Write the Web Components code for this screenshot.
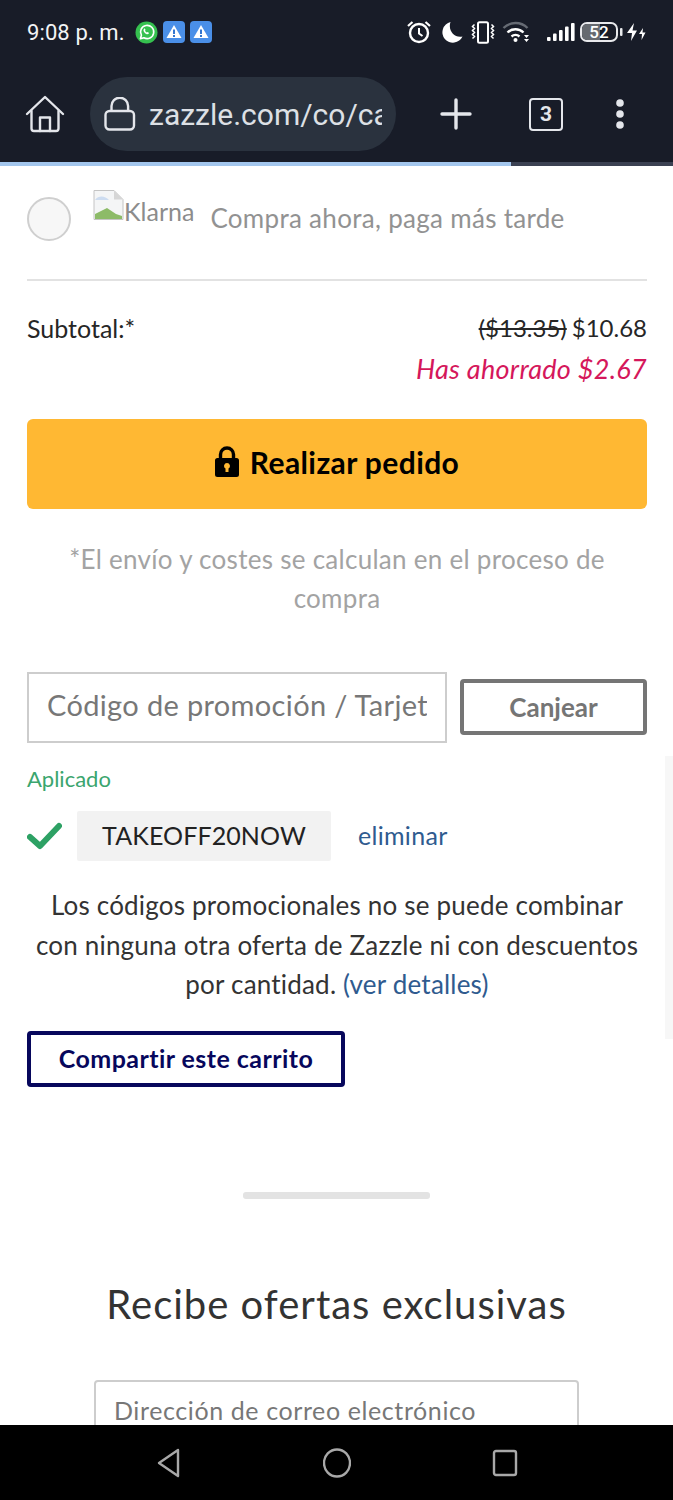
<!DOCTYPE html>
<html lang="es">
<head>
<meta charset="utf-8">
<title>Carrito</title>
<style>
    html, body {
        margin: 0;
        height: 1500px;
        overflow: hidden;
        background: #fff;
    }
    body {
        display: flex;
        flex-direction: column;
        font-family: "Lato", "Liberation Sans", sans-serif;
    }
    page-content {
        flex: 1;
        min-height: 0;
    }
</style>
</head>
<body>
<browser-chrome url="zazzle.com/co/cart" tabs="3" progress="511"></browser-chrome>
<page-content>
    <payment-option label="Klarna" text="Compra ahora, paga más tarde"></payment-option>
    <order-summary was="($13.35)" total="$10.68" saved="Has ahorrado $2.67"></order-summary>
    <promo-form code="TAKEOFF20NOW"></promo-form>
    <share-cart></share-cart>
    <offers-signup></offers-signup>
</page-content>
<nav-bar></nav-bar>

<script>
class BrowserChrome extends HTMLElement {
    constructor() {
        super();
        this.attachShadow({ mode: 'open' });
    }

    connectedCallback() {
        const url = this.getAttribute('url');
        const tabs = this.getAttribute('tabs');
        const progress = this.getAttribute('progress');

        this.shadowRoot.innerHTML = `
            <style>
                :host {
                    display: block;
                    flex: none;
                    height: 166px;
                    background: #181c28;
                    color: #fff;
                    position: relative;
                }
                .status {
                    display: flex;
                    align-items: center;
                    height: 32px;
                    padding: 16px 27px 0 27px;
                    font: 400 22px "Roboto", sans-serif;
                    color: #f2f3f5;
                }
                .time { margin-right: 5px; letter-spacing: .1px; }
                .status svg { display: block; flex: none; }
                .left { display: flex; align-items: center; gap: 5px; }
                .right { display: flex; align-items: center; margin-left: auto; }
                .toolbar {
                    display: flex;
                    align-items: center;
                    height: 74px;
                    margin-top: 29px;
                    padding-left: 25px;
                }
                .home { width: 40px; flex: none; margin-right: 25px; display: block; }
                .pill {
                    width: 306px;
                    height: 74px;
                    flex: none;
                    box-sizing: border-box;
                    border-radius: 37px;
                    background: #2a323e;
                    display: flex;
                    align-items: center;
                    padding: 0 14px 0 14px;
                    font: 400 30px "Roboto", sans-serif;
                    color: #dde0e5;
                }
                .pill svg { flex: none; margin-right: 13px; }
                .url { overflow: hidden; white-space: nowrap; flex: 1; }
                .actions { display: flex; align-items: center; }
                .tabs {
                    width: 34px;
                    height: 33px;
                    box-sizing: border-box;
                    border: 2.5px solid #e4e6eb;
                    border-radius: 4px;
                    display: flex;
                    align-items: center;
                    justify-content: center;
                    font: 700 21px "Roboto", sans-serif;
                    color: #e4e6eb;
                    margin: 0 52px 0 57px;
                }
                .track {
                    position: absolute;
                    left: 0;
                    right: 0;
                    bottom: 0;
                    height: 4px;
                    background: #3b4152;
                }
                .bar { height: 100%; background: #a3c6ed; }
            </style>
            <div class="status">
                <div class="left">
                    <span class="time">9:08 p. m.</span>
                    <svg width="23" height="23" viewBox="0 0 23 23">
                        <circle cx="11.5" cy="11.5" r="11" fill="#35c04f"/>
                        <path d="M5.4 17.7l1-3.5a6.6 6.6 0 1 1 2.5 2.5z" fill="none" stroke="#fff" stroke-width="1.6" stroke-linejoin="round"/>
                        <path d="M9 8c-.9.9-.6 2.300.7 3.700s2.800 1.900 3.800 1.100l.7-.9-1.700-1-.7.6c-.8-.3-1.400-.9-1.800-1.800l.6-.7-.9-1.700z" fill="#fff"/>
                    </svg>
                    <svg width="22" height="22" viewBox="0 0 22 22">
                        <rect width="22" height="22" rx="4" fill="#4a8fe8"/>
                        <path d="M11 4l7.500 13h-15z" fill="#fff"/>
                        <rect x="10" y="8.500" width="2" height="4.500" fill="#3576d0"/>
                        <rect x="10" y="14" width="2" height="2" fill="#3576d0"/>
                    </svg>
                    <svg width="22" height="22" viewBox="0 0 22 22">
                        <rect width="22" height="22" rx="4" fill="#4a8fe8"/>
                        <path d="M11 4l7.500 13h-15z" fill="#fff"/>
                        <rect x="10" y="8.500" width="2" height="4.500" fill="#3576d0"/>
                        <rect x="10" y="14" width="2" height="2" fill="#3576d0"/>
                    </svg>
                </div>
                <div class="right">
                    <svg width="26" height="24" viewBox="0 0 26 24" fill="none" stroke="#fff">
                        <circle cx="13" cy="13" r="9" stroke-width="2.400"/>
                        <path d="M13 8v5.500l3.500 2.500" stroke-width="2"/>
                        <path d="M2 6l4.500-4M24 6l-4.500-4" stroke-width="2.200"/>
                    </svg>
                    <svg width="22" height="23" viewBox="0 0 22 23" style="margin-left:9px">
                        <path d="M9.500 1a10.500 10.500 0 1 0 12 14.500C14 17.500 6.500 10 9.500 1z" fill="#fff"/>
                    </svg>
                    <svg width="24" height="23" viewBox="0 0 24 23" fill="none" stroke="#fff" style="margin-left:8px">
                        <rect x="7" y="1.200" width="10" height="20.600" rx="1.500" stroke-width="2"/>
                        <path d="M3.500 3.500l-2 2 2 2-2 2 2 2-2 2 2 2-2 2M20.500 3.500l2 2-2 2 2 2-2 2 2 2-2 2 2 2" stroke-width="1.500"/>
                    </svg>
                    <svg width="27" height="22" viewBox="0 0 27 22" fill="none" style="margin-left:7px">
                        <path d="M1.500 7a17 17 0 0 1 24 0" stroke="#666b74" stroke-width="2.400"/>
                        <path d="M5.500 11.500a11.500 11.500 0 0 1 16 0" stroke="#fff" stroke-width="2.400"/>
                        <path d="M9.500 15.500a6 6 0 0 1 8 0" stroke="#fff" stroke-width="2.400"/>
                        <circle cx="13.500" cy="19" r="2" fill="#fff"/>
                        <path d="M22 14h5l-2.500 3zM22 18h5l-2.500 3z" fill="#fff"/>
                    </svg>
                    <svg width="28" height="18" viewBox="0 0 28 18" style="margin-left:18px">
                        <rect x="0" y="14" width="3.600" height="4" rx="1" fill="#fff"/>
                        <rect x="6" y="10.500" width="3.600" height="7.500" rx="1" fill="#fff"/>
                        <rect x="12" y="7" width="3.600" height="11" rx="1" fill="#fff"/>
                        <rect x="18" y="3.500" width="3.600" height="14.500" rx="1" fill="#fff"/>
                        <rect x="24" y="0" width="3.600" height="18" rx="1" fill="#fff"/>
                    </svg>
                    <span style="position:relative;width:38px;height:20px;box-sizing:border-box;border:2px solid #e8e9ec;border-radius:7px;margin-left:5px;display:flex;align-items:center;justify-content:center;font:500 17px Roboto,sans-serif;color:#fff;overflow:hidden;flex:none">
                        <span style="position:absolute;left:0;top:0;bottom:0;width:52%;background:#666a70"></span>
                        <span style="position:relative">52</span>
                    </span>
                    <svg width="3" height="8" viewBox="0 0 3 8" style="margin-left:2px"><rect width="2.500" height="8" rx="1" fill="#e8e9ec"/></svg>
                    <svg width="20" height="18" viewBox="0 0 20 18" style="margin-left:3px">
                        <path d="M8 0L1 10h5l-1 8 6-10.500H6.500z" fill="#fff"/>
                        <path d="M17 5l-4 6h3l-.5 6 4-7.500h-3z" fill="#fff"/>
                    </svg>
                </div>
            </div>
            <div class="toolbar">
                <svg class="home" width="40" height="38" viewBox="0 0 40 38" fill="none" stroke="#e4e6eb" stroke-width="2.400" stroke-linejoin="round" stroke-linecap="round">
                    <path d="M2 19L20 2l18 17"/>
                    <path d="M6.500 16v17.500a2.500 2.500 0 0 0 2.500 2.500h22a2.500 2.500 0 0 0 2.500-2.500V16"/>
                    <path d="M15 36V22.500h10V36"/>
                </svg>
                <div class="pill">
                    <svg width="32" height="34" viewBox="0 0 32 34" fill="none" stroke="#e4e6eb" stroke-width="2.400">
                        <rect x="1.500" y="14" width="28.500" height="18.500" rx="4"/>
                        <path d="M7.500 14V9a8.300 8.300 0 0 1 16.600 0v5"/>
                    </svg>
                    <span class="url">${url}</span>
                </div>
                <div class="actions">
                    <svg width="32" height="32" viewBox="0 0 32 32" style="margin-left:44px;display:block">
                        <path d="M16 2v28M2 16h28" stroke="#e4e6eb" stroke-width="3.400" stroke-linecap="round"/>
                    </svg>
                    <span class="tabs">${tabs}</span>
                    <svg width="10" height="32" viewBox="0 0 10 32" style="display:block">
                        <circle cx="5" cy="5" r="3.800" fill="#e4e6eb"/>
                        <circle cx="5" cy="16" r="3.800" fill="#e4e6eb"/>
                        <circle cx="5" cy="27" r="3.800" fill="#e4e6eb"/>
                    </svg>
                </div>
            </div>
            <div class="track"><div class="bar" style="width:${progress}px"></div></div>
        `;
    }
}

class PaymentOption extends HTMLElement {
    constructor() {
        super();
        this.attachShadow({ mode: 'open' });
    }

    connectedCallback() {
        this.shadowRoot.innerHTML = `
            <style>
                :host {
                    display: block;
                    margin: 0 26px 0 27px;
                    height: 115px;
                    box-sizing: border-box;
                    border-bottom: 2px solid #e2e2e2;
                    position: relative;
                    padding-top: 24px;
                    color: #929292;
                }
                .row { display: flex; align-items: flex-start; }
                .radio {
                    width: 44px;
                    height: 44px;
                    box-sizing: border-box;
                    flex: none;
                    border: 2px solid #cfcfcf;
                    border-radius: 50%;
                    background: #f7f7f7;
                    margin-top: 7px;
                    margin-right: 22px;
                }
                .broken {
                    display: flex;
                    align-items: flex-start;
                    font-size: 25px;
                    color: #8c8c8c;
                    margin-right: 16px;
                    line-height: 42px;
                }
                .broken svg { display: block; flex: none; }
                .text {
                    font-size: 26px;
                    line-height: 42px;
                    margin-top: 7px;
                    white-space: nowrap;
                    letter-spacing: .3px;
                }
            </style>
            <div class="row">
                <span class="radio"></span>
                <span class="broken">
                    <svg width="31" height="30" viewBox="0 0 31 30">
                        <path d="M1 .5h20l9 9v20H1z" fill="#f4f5f6" stroke="#c4c4c4"/>
                        <path d="M21 .5v9h9z" fill="#d6d6d6"/>
                        <path d="M2 10c4-5 10-4 14 0H2z" fill="#cddcf0"/>
                        <path d="M2 29V24l12-6 9 6 6 2v3z" fill="#8dbb68"/>
                    </svg>
                    <span>${this.getAttribute('label')}</span>
                </span>
                <span class="text">${this.getAttribute('text')}</span>
            </div>
        `;
    }
}

class OrderSummary extends HTMLElement {
    constructor() {
        super();
        this.attachShadow({ mode: 'open' });
    }

    connectedCallback() {
        this.shadowRoot.innerHTML = `
            <style>
                :host {
                    display: block;
                    padding: 27px 26px 0 27px;
                    font-size: 25px;
                    color: #262626;
                }
                .line {
                    display: flex;
                    justify-content: space-between;
                    line-height: 40px;
                }
                .price { font-size: 24px; }
                s { text-decoration-thickness: 2px; margin-right: 5px; }
                .saved {
                    margin-top: 1px;
                    text-align: right;
                    color: #d5175b;
                    font-style: italic;
                    font-size: 27px;
                    letter-spacing: .3px;
                    line-height: 40px;
                }
                .cta {
                    margin-top: 30px;
                    height: 90px;
                    box-sizing: border-box;
                    padding-bottom: 5px;
                    border-radius: 6px;
                    background: #ffb833;
                    color: #000;
                    display: flex;
                    align-items: center;
                    justify-content: center;
                    gap: 11px;
                    font-size: 30px;
                    letter-spacing: .4px;
                    font-weight: 700;
                }
                .cta svg { display: block; }
                .note {
                    margin: 31px 12px 0;
                    font-size: 26px;
                    text-align: center;
                    line-height: 39px;
                    color: #a3a3a3;
                    letter-spacing: .28px;
                }
            </style>
            <div class="line">
                <span>Subtotal:*</span>
                <span class="price"><s>${this.getAttribute('was')}</s>${this.getAttribute('total')}</span>
            </div>
            <div class="saved">${this.getAttribute('saved')}</div>
            <div class="cta">
                <svg width="24" height="31" viewBox="0 0 24 31">
                    <path d="M5.500 13V8.500a6.500 6.500 0 0 1 13 0V13" fill="none" stroke="#000" stroke-width="3.400"/>
                    <path fill-rule="evenodd" d="M2.500 12h19A2.500 2.500 0 0 1 24 14.500v14a2.500 2.500 0 0 1-2.500 2.500h-19A2.500 2.500 0 0 1 0 28.500v-14A2.500 2.500 0 0 1 2.500 12zM12 17a3 3 0 0 0-1.500 5.600V26h3v-3.400A3 3 0 0 0 12 17z" fill="#000"/>
                </svg>
                <span>Realizar pedido</span>
            </div>
            <div class="note">*El envío y costes se calculan en el proceso de compra</div>
        `;
    }
}

class PromoForm extends HTMLElement {
    constructor() {
        super();
        this.attachShadow({ mode: 'open' });
    }

    connectedCallback() {
        this.shadowRoot.innerHTML = `
            <style>
                :host {
                    display: block;
                    padding: 54px 26px 0 27px;
                    font-size: 25px;
                    color: #333;
                    position: relative;
                }
                .form { display: flex; align-items: center; }
                .field {
                    width: 420px;
                    height: 71px;
                    flex: none;
                    box-sizing: border-box;
                    border: 2px solid #cdcdcd;
                    padding: 0 18px 6px;
                    display: flex;
                    align-items: center;
                    font-size: 29px;
                    color: #777;
                    letter-spacing: .35px;
                }
                .field span { overflow: hidden; white-space: nowrap; }
                .redeem {
                    margin-left: 13px;
                    margin-bottom: 1px;
                    flex: 1;
                    height: 56px;
                    box-sizing: border-box;
                    border: 4px solid #757575;
                    border-radius: 4px;
                    display: flex;
                    align-items: center;
                    justify-content: center;
                    padding-bottom: 1px;
                    font-size: 26px;
                    font-weight: 700;
                    color: #757575;
                }
                .applied {
                    margin-top: 22px;
                    font-size: 22px;
                    line-height: 28px;
                    color: #3aa56e;
                }
                .code { display: flex; align-items: center; margin-top: 18px; }
                .code svg { display: block; flex: none; margin-right: 15px; }
                .chip {
                    width: 254px;
                    height: 50px;
                    box-sizing: border-box;
                    background: #f2f2f2;
                    border-radius: 2px;
                    padding-bottom: 3px;
                    display: flex;
                    align-items: center;
                    justify-content: center;
                    color: #222;
                    letter-spacing: .1px;
                }
                .remove { margin: 0 0 3px 27px; color: #2f5b8f; letter-spacing: .3px; }
                .terms {
                    margin-top: 25px;
                    padding: 0 2px;
                    font-size: 26px;
                    text-align: center;
                    line-height: 39.500px;
                    letter-spacing: .2px;
                }
                .terms a { color: #2f5b8f; }
                .thumb {
                    position: absolute;
                    right: 0;
                    top: 138px;
                    width: 8px;
                    height: 283px;
                    background: #f7f7f7;
                }
            </style>
            <div class="form">
                <div class="field"><span>Código de promoción / Tarjet</span></div>
                <div class="redeem">Canjear</div>
            </div>
            <div class="applied">Aplicado</div>
            <div class="code">
                <svg width="35" height="28" viewBox="0 0 35 28">
                    <path d="M3 15l10 9L32 4" fill="none" stroke="#2da164" stroke-width="6" stroke-linecap="round" stroke-linejoin="round"/>
                </svg>
                <span class="chip">${this.getAttribute('code')}</span>
                <span class="remove">eliminar</span>
            </div>
            <div class="terms">Los códigos promocionales no se puede combinar con ninguna otra oferta de Zazzle ni con descuentos por cantidad. <a>(ver detalles)</a></div>
            <div class="thumb"></div>
        `;
    }
}

class ShareCart extends HTMLElement {
    constructor() {
        super();
        this.attachShadow({ mode: 'open' });
    }

    connectedCallback() {
        this.shadowRoot.innerHTML = `
            <style>
                :host {
                    display: block;
                    padding: 26px 0 0 27px;
                }
                .btn {
                    width: 318px;
                    height: 56px;
                    box-sizing: border-box;
                    border: 4px solid #07075c;
                    border-radius: 4px;
                    padding-bottom: 2px;
                    display: flex;
                    align-items: center;
                    justify-content: center;
                    font-size: 25px;
                    letter-spacing: .45px;
                    font-weight: 700;
                    color: #07075c;
                }
            </style>
            <div class="btn">Compartir este carrito</div>
        `;
    }
}

class OffersSignup extends HTMLElement {
    constructor() {
        super();
        this.attachShadow({ mode: 'open' });
    }

    connectedCallback() {
        this.shadowRoot.innerHTML = `
            <style>
                :host {
                    display: block;
                    text-align: center;
                    color: #333;
                }
                .rule {
                    width: 187px;
                    height: 7px;
                    margin: 105px auto 0;
                    border-radius: 3px;
                    background: #e3e3e3;
                }
                h2 {
                    margin: 79px 0 0;
                    font-size: 40px;
                    line-height: 52px;
                    font-weight: 400;
                    letter-spacing: 1px;
                }
                .field {
                    width: 485px;
                    height: 60px;
                    margin: 50px auto 0;
                    box-sizing: border-box;
                    border: 2px solid #cdcdcd;
                    border-radius: 4px;
                    padding: 12px 18px 0;
                    text-align: left;
                    font-size: 25px;
                    line-height: 32px;
                    color: #777;
                    letter-spacing: .6px;
                }
            </style>
            <div class="rule"></div>
            <h2>Recibe ofertas exclusivas</h2>
            <div class="field">Dirección de correo electrónico</div>
        `;
    }
}

class NavBar extends HTMLElement {
    constructor() {
        super();
        this.attachShadow({ mode: 'open' });
    }

    connectedCallback() {
        this.shadowRoot.innerHTML = `
            <style>
                :host {
                    display: block;
                    flex: none;
                    height: 75px;
                    background: #000;
                    position: relative;
                    z-index: 1;
                }
                .keys {
                    display: flex;
                    justify-content: center;
                    align-items: center;
                    height: 75px;
                    gap: 141px;
                }
                svg { display: block; }
            </style>
            <div class="keys">
                <svg width="26" height="30" viewBox="0 0 26 30" fill="none" stroke="#a8a8a8" stroke-width="2.400" stroke-linejoin="round">
                    <path d="M22 2L3 15l19 13z"/>
                </svg>
                <svg width="28" height="30" viewBox="0 0 28 30" fill="none" stroke="#a8a8a8" stroke-width="2.400">
                    <ellipse cx="14" cy="15" rx="13" ry="13.500"/>
                </svg>
                <svg width="26" height="28" viewBox="0 0 26 28" fill="none" stroke="#a8a8a8" stroke-width="2.400">
                    <rect x="2" y="2" width="22" height="24" rx="2"/>
                </svg>
            </div>
        `;
    }
}

customElements.define('browser-chrome', BrowserChrome);
customElements.define('payment-option', PaymentOption);
customElements.define('order-summary', OrderSummary);
customElements.define('promo-form', PromoForm);
customElements.define('share-cart', ShareCart);
customElements.define('offers-signup', OffersSignup);
customElements.define('nav-bar', NavBar);
</script>
</body>
</html>
